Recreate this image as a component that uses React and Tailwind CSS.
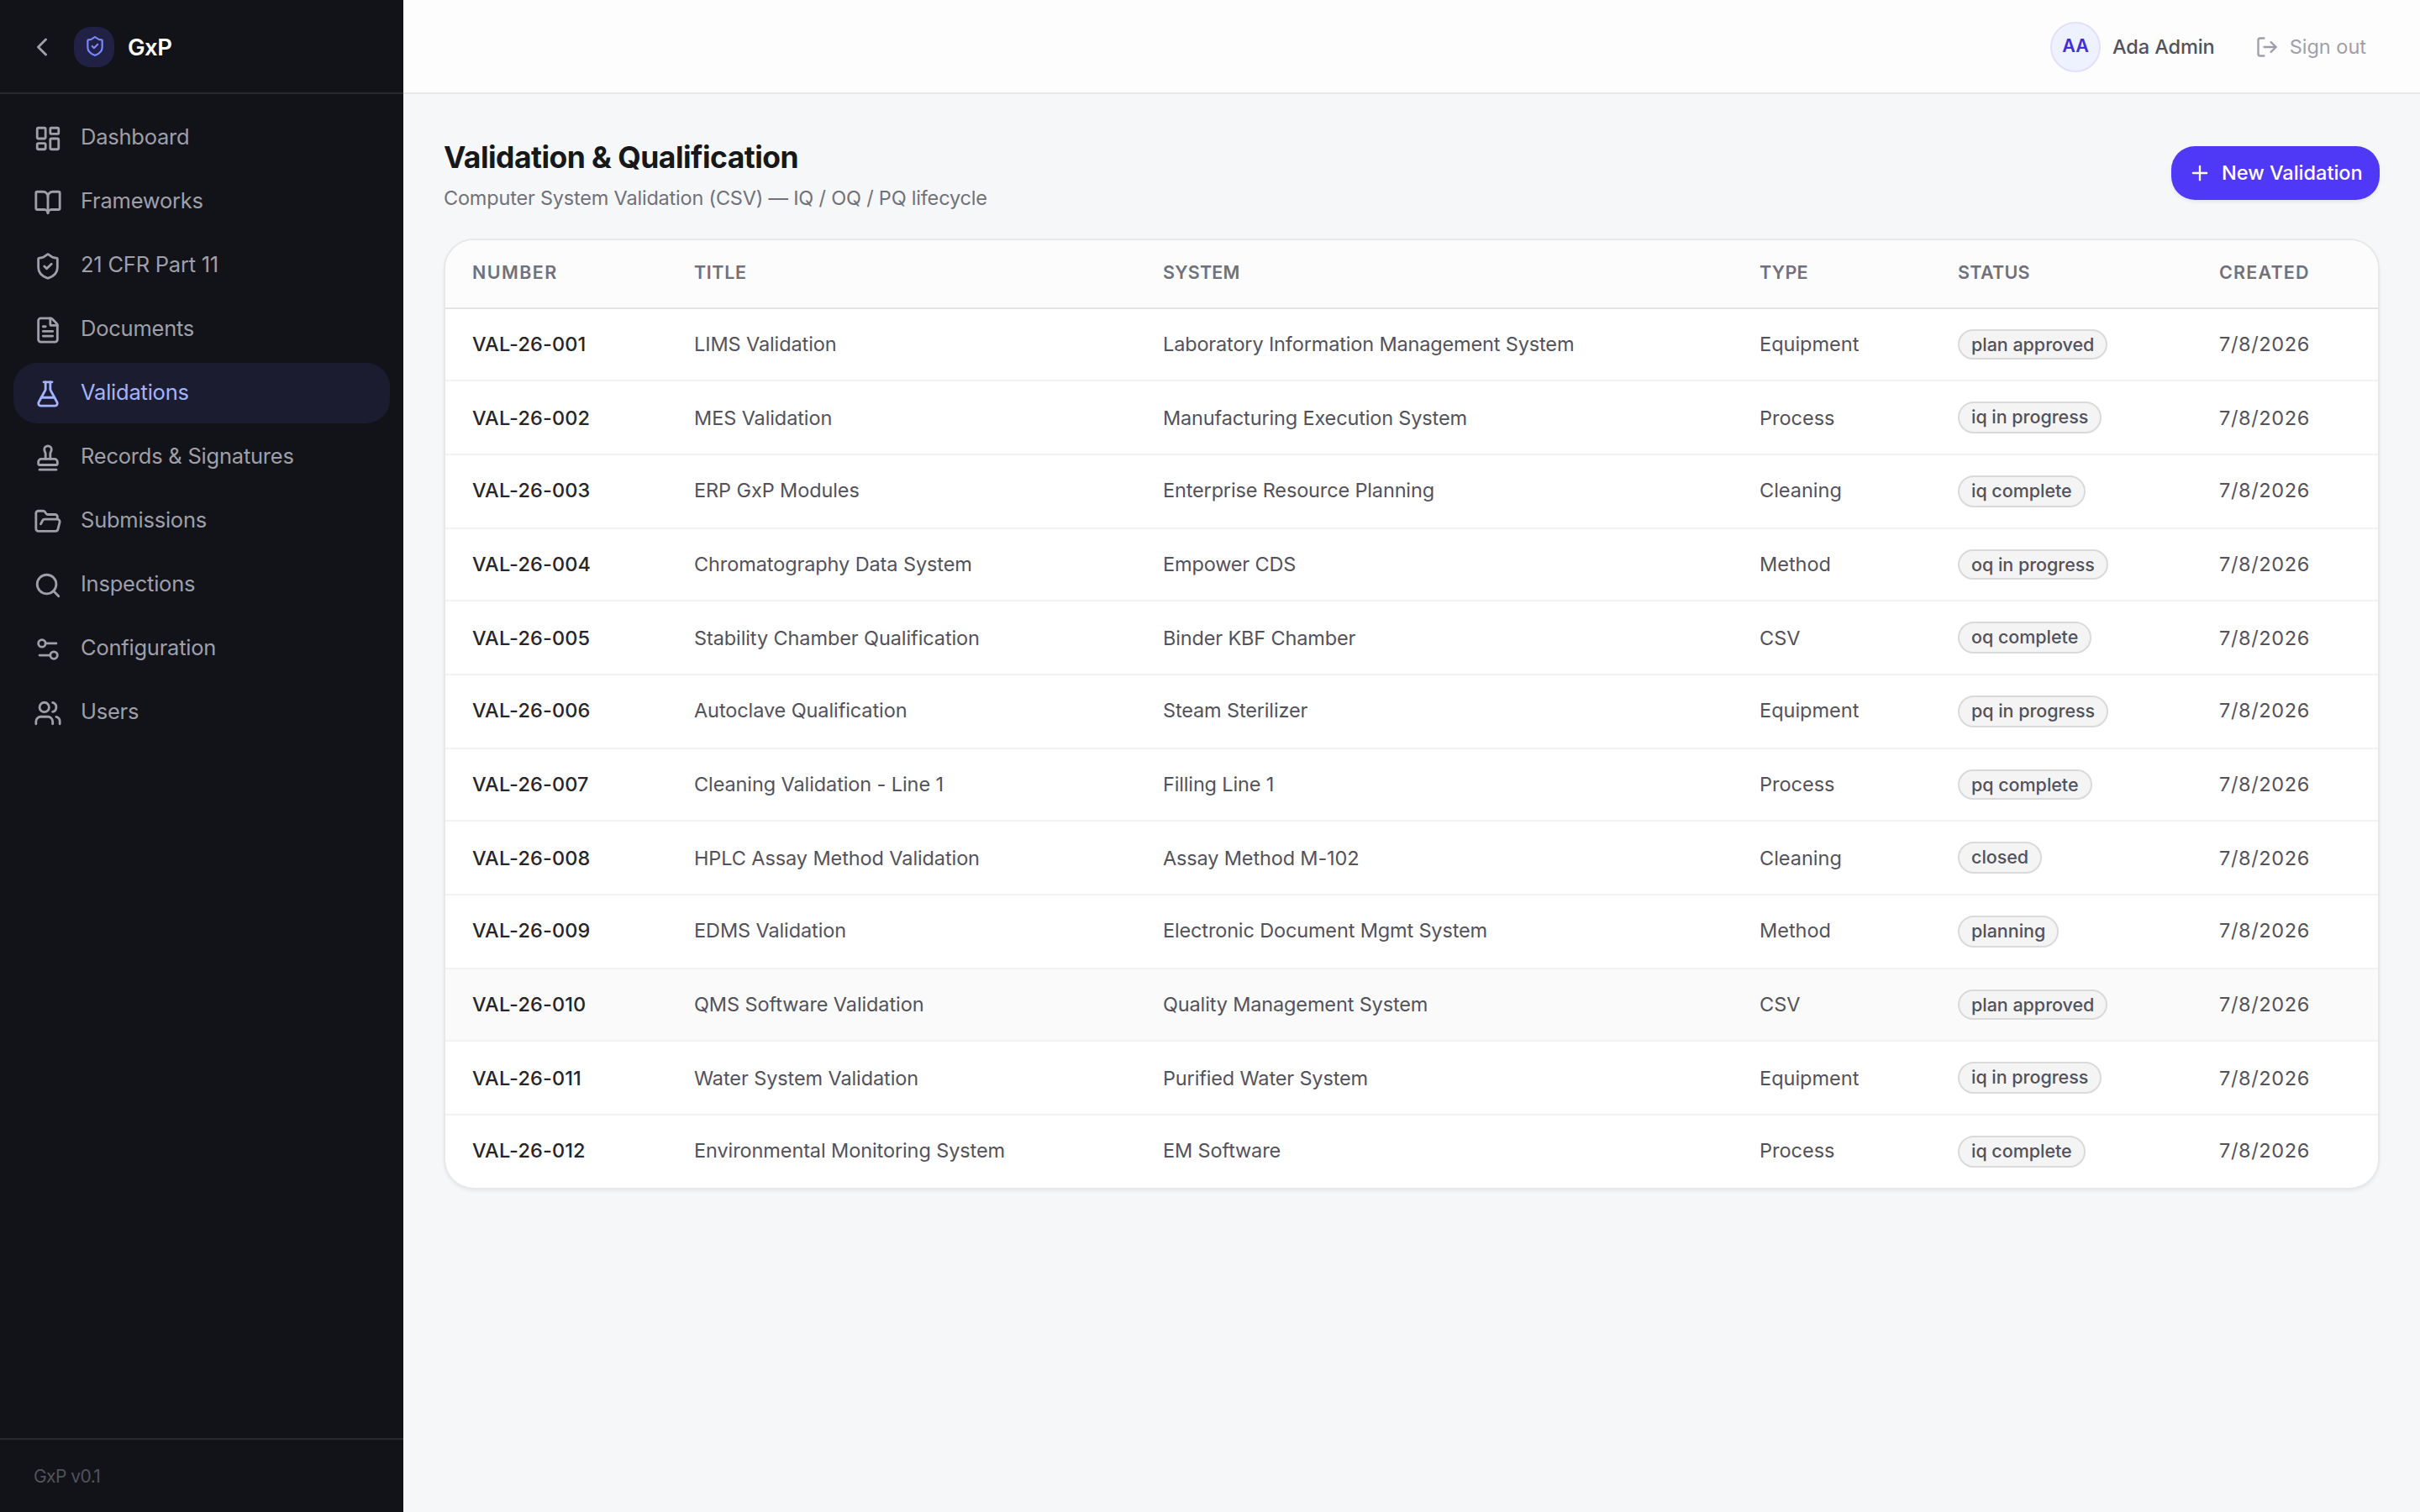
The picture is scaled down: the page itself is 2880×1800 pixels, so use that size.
import React from "react";
import {
  BookOpen,
  ChevronLeft,
  FileText,
  FlaskConical,
  FolderOpen,
  LayoutDashboard,
  LogOut,
  Plus,
  Search,
  Settings2,
  ShieldCheck,
  Stamp,
  Users,
} from "lucide-react";

const NAV = [
  { label: "Dashboard", icon: LayoutDashboard },
  { label: "Frameworks", icon: BookOpen },
  { label: "21 CFR Part 11", icon: ShieldCheck },
  { label: "Documents", icon: FileText },
  { label: "Validations", icon: FlaskConical, active: true },
  { label: "Records & Signatures", icon: Stamp },
  { label: "Submissions", icon: FolderOpen },
  { label: "Inspections", icon: Search },
  { label: "Configuration", icon: Settings2 },
  { label: "Users", icon: Users },
];

const ROWS = [
  ["VAL-26-001", "LIMS Validation", "Laboratory Information Management System", "Equipment", "plan approved"],
  ["VAL-26-002", "MES Validation", "Manufacturing Execution System", "Process", "iq in progress"],
  ["VAL-26-003", "ERP GxP Modules", "Enterprise Resource Planning", "Cleaning", "iq complete"],
  ["VAL-26-004", "Chromatography Data System", "Empower CDS", "Method", "oq in progress"],
  ["VAL-26-005", "Stability Chamber Qualification", "Binder KBF Chamber", "CSV", "oq complete"],
  ["VAL-26-006", "Autoclave Qualification", "Steam Sterilizer", "Equipment", "pq in progress"],
  ["VAL-26-007", "Cleaning Validation - Line 1", "Filling Line 1", "Process", "pq complete"],
  ["VAL-26-008", "HPLC Assay Method Validation", "Assay Method M-102", "Cleaning", "closed"],
  ["VAL-26-009", "EDMS Validation", "Electronic Document Mgmt System", "Method", "planning"],
  ["VAL-26-010", "QMS Software Validation", "Quality Management System", "CSV", "plan approved"],
  ["VAL-26-011", "Water System Validation", "Purified Water System", "Equipment", "iq in progress"],
  ["VAL-26-012", "Environmental Monitoring System", "EM Software", "Process", "iq complete"],
];

const COLUMNS = "grid grid-cols-[264px_558px_710px_236px_311px_1fr] items-center";

function Sidebar() {
  return (
    <aside className="flex w-[480px] shrink-0 flex-col bg-[#121318]">
      <div className="flex h-28 items-center border-b-2 border-[#292a2e] pt-0.5 pl-8">
        <ChevronLeft size={36} className="text-zinc-400" />
        <div className="ml-5 flex size-12 items-center justify-center rounded-[20px] bg-[#212145]">
          <ShieldCheck size={26} className="-mt-0.5 ml-0.5 text-indigo-400" />
        </div>
        <span className="ml-4 pt-0.5 text-[27.5px] font-semibold tracking-[-0.5px] text-white">GxP</span>
      </div>
      <nav className="flex flex-1 flex-col gap-1 p-4">
        {NAV.map(({ label, icon: Icon, active }) => (
          <a
            key={label}
            className={
              "flex h-[72px] items-center gap-[22px] rounded-[28px] pl-6 " +
              (active ? "bg-[#1b1c30] text-indigo-300" : "text-zinc-400")
            }
          >
            <Icon size={34} className="mt-0.5" />
            <span className="mb-0.5 text-[25.5px] tracking-[-0.23px]">{label}</span>
          </a>
        ))}
      </nav>
      <div className="flex h-[88px] items-center border-t-2 border-[#292a2e] pl-10 text-[21px] tracking-[-0.55px] text-[#52525c]">
        GxP v0.1
      </div>
    </aside>
  );
}

function Topbar() {
  return (
    <header className="flex h-28 items-center justify-end border-b-2 border-[#e8e8ea] bg-[#fdfdfd] pt-0.5 pr-12">
      <div className="flex items-center gap-[14px]">
        <div className="flex size-[60px] items-center justify-center rounded-full border-2 border-[#e2dffc] bg-[#eef2ff] pb-[3px] text-[21.5px] font-semibold text-[#432dd7]">
          AA
        </div>
        <span className="text-[23.5px] font-medium tracking-[-0.1px] text-zinc-600">Ada Admin</span>
      </div>
      <button className="ml-8 flex items-center gap-[13px] px-4 text-[23.5px] text-zinc-400">
        <LogOut size={28} />
        Sign out
      </button>
    </header>
  );
}

function Table() {
  return (
    <section className="overflow-hidden rounded-[36px] border-2 border-[#e7e8ea] bg-white shadow-[0_2px_4px_rgba(0,0,0,0.06)]">
      <div
        className={
          COLUMNS +
          " h-[82px] border-b-2 border-[#e4e4e6] bg-[#fcfcfc] pb-0.5 pl-8 text-[21.5px] font-semibold text-[#71717b]"
        }
      >
        <span className="tracking-[1.4px]">NUMBER</span>
        <span className="tracking-[0.6px]">TITLE</span>
        <span className="tracking-[0.2px]">SYSTEM</span>
        <span className="tracking-[0.3px]">TYPE</span>
        <span className="tracking-[0.3px]">STATUS</span>
        <span className="tracking-[1.2px]">CREATED</span>
      </div>
      {ROWS.map(([number, title, system, type, status], i) => {
        const last = i === ROWS.length - 1;
        const short = i % 3 === 0;
        const text = short ? "" : i % 3 === 2 ? "pb-[3px]" : "pt-0.5";
        return (
          <div
            key={number}
            className={
              COLUMNS +
              " pl-8 text-[23.5px] text-zinc-600 " +
              (short || last ? "h-[86px] " : "h-[88px] ") +
              (last ? "" : "border-b-2 border-[#f3f3f4] ") +
              (i === 9 ? "bg-[#fafafa]" : "")
            }
          >
            <span className={"font-medium tracking-[0.12px] text-[#26262a] " + text}>{number}</span>
            <span className={"tracking-[-0.1px] " + text}>{title}</span>
            <span className={"tracking-[-0.15px] " + text}>{system}</span>
            <span className={text}>{type}</span>
            <span
              className={
                "flex items-center justify-self-start rounded-full border-2 border-[#dadadb] bg-[#f4f4f5] px-[14px] text-[21.5px] font-medium tracking-[-0.03px] " +
                (short ? "h-9 pt-px" : "h-[38px]")
              }
            >
              {status}
            </span>
            <span className={"tracking-[0.65px] " + text}>7/8/2026</span>
          </div>
        );
      })}
    </section>
  );
}

export default function App() {
  return (
    <div className="flex h-[1800px] w-[2880px] bg-[#f6f7f9] font-['Inter',sans-serif] leading-none whitespace-nowrap">
      <Sidebar />
      <div className="flex flex-1 flex-col">
        <Topbar />
        <main className="px-12 pt-12">
          <div className="mb-8 flex h-[92px] items-center justify-between">
            <div className="pt-0.5">
              <h1 className="text-[35.5px] leading-[54px] font-bold tracking-[-0.55px] text-zinc-900">
                Validation &amp; Qualification
              </h1>
              <p className="mt-1 text-[23.5px] leading-[34px] tracking-[-0.2px] text-[#71717b]">
                Computer System Validation (CSV) — IQ / OQ / PQ lifecycle
              </p>
            </div>
            <button className="flex h-16 w-[248px] items-center gap-3 rounded-[28px] bg-[#4f39f6] pl-5 text-[23.5px] font-medium text-white shadow-[0_2px_4px_rgba(0,0,0,0.08)]">
              <Plus size={28} />
              New Validation
            </button>
          </div>
          <Table />
        </main>
      </div>
    </div>
  );
}
